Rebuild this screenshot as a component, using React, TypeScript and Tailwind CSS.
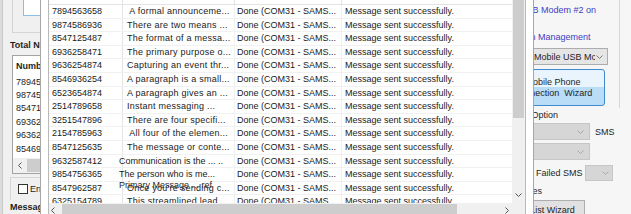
import React from "react";

type Row = { num: string; text: string; shift?: boolean; overlay?: string };

const rows: Row[] = [
	{ num: "7894563658", text: " A formal announceme..." },
	{ num: "9874586936", text: "There are two means ..." },
	{ num: "8547125487", text: "The format of a messa..." },
	{ num: "6936258471", text: "The primary purpose o..." },
	{ num: "9636254874", text: "Capturing an event thr..." },
	{ num: "8546936254", text: "A paragraph is a small..." },
	{ num: "6523654874", text: "A paragraph gives an ..." },
	{ num: "2514789658", text: "Instant messaging ..." },
	{ num: "3251547896", text: "There are four specifi..." },
	{ num: "2154785963", text: " All four of the elemen..." },
	{ num: "8547125635", text: "The message or conte..." },
	{ num: "9632587412", text: "Communication is the ... ..", shift: true },
	{ num: "9854756365", text: "The person who is me...", shift: true },
	{
		num: "8547962587",
		text: "Once you're sending c...",
		overlay: "Primary Message ... ref",
	},
	{ num: "6325154789", text: "This streamlined lead..." },
];

const bgNumbers = rows.slice(0, 6).map((r) => r.num);

const Chevron = ({
	dir,
	color = "#555555",
}: {
	dir: "down" | "left" | "right";
	color?: string;
}) => {
	const w = dir === "down" ? 7 : 4;
	const h = dir === "down" ? 4 : 7;
	const d =
		dir === "down"
			? "M0.5 0.5L3.5 3.5L6.5 0.5"
			: dir === "left"
				? "M3.5 0.5L0.5 3.5L3.5 6.5"
				: "M0.5 0.5L3.5 3.5L0.5 6.5";
	return (
		<svg width={w} height={h} viewBox={`0 0 ${w} ${h}`} className="block shrink-0">
			<path d={d} fill="none" stroke={color} strokeWidth="1" />
		</svg>
	);
};

const LeftPanel = () => (
	<div className="flex w-[127px] shrink-0 flex-col">
		<div className="ml-[9px] h-[33px] shrink-0 border-b border-l border-[#d5d5d5]">
			<div className="ml-[10px] h-[16px] border border-t-0 border-[#8fbdea] bg-white" />
		</div>
		<div className="ml-[7px] mt-[6px] shrink-0 whitespace-nowrap font-bold">
			Total Numbers
		</div>
		<div className="ml-[9px] mt-[4px] flex h-[119px] shrink-0 flex-col border border-[#a3a3a3] bg-white">
			<div className="flex h-[19px] shrink-0 items-center pl-[3px] font-bold">
				Number
			</div>
			{bgNumbers.map((n) => (
				<div key={n} className="flex h-[13.4px] shrink-0 items-center pl-[3px]">
					{n}
				</div>
			))}
			<div className="mt-auto flex h-[15px] shrink-0 bg-[#f0f0f0]">
				<div className="flex w-[13px] items-center justify-center">
					<Chevron dir="left" />
				</div>
				<div className="my-[1px] ml-[1px] flex-1 bg-[#cdcdcd]" />
			</div>
		</div>
		<div className="ml-[7px] mt-[3px] flex h-[23px] shrink-0 items-center border-l border-t border-[#d5d5d5] pl-[7px]">
			<div className="h-[10px] w-[10px] shrink-0 border border-[#333333] bg-white" />
			<span className="ml-[2px] whitespace-nowrap">Enable Delivery Report</span>
		</div>
		<div className="ml-[7px] mt-[1px] shrink-0 whitespace-nowrap font-bold">
			Message
		</div>
	</div>
);

const RightPanel = () => (
	<div className="flex w-[161px] shrink-0 flex-col bg-[#f6f6f6]">
		<div className="flex w-[150px] shrink-0 flex-col border-r border-[#d6d6d6] pb-[2px]">
			<div className="ml-[50px] mt-[4px] whitespace-nowrap text-[#3d3dc2]">
				USB Modem #2 on
			</div>
			<div className="ml-[20px] mt-[15px] whitespace-nowrap text-[#3d3dc2]">
				Connection Management
			</div>
			<div className="ml-[52px] mt-[5px] flex h-[17px] w-[86px] shrink-0 items-center border border-[#acacac] bg-[#e5e5e5]">
				<span className="flex-1 overflow-hidden whitespace-nowrap pl-[11px]">
					Mobile USB Modem
				</span>
				<span className="ml-[1px] mr-[4px]">
					<Chevron dir="down" color="#7a7a7a" />
				</span>
			</div>
			<div className="ml-[31px] mt-[4px] flex h-[37px] w-[104px] shrink-0 flex-col items-center justify-center rounded-[3px] border border-[#3d8ad1] bg-[linear-gradient(to_bottom,#e9f4fd_50%,#b9dcf7_50%)] leading-[11px]">
				<span className="whitespace-nowrap">Mobile Phone</span>
				<span className="whitespace-pre">Connection  Wizard</span>
			</div>
		</div>
		<div className="ml-[38px] mt-[1px] shrink-0 whitespace-nowrap">Send Option</div>
		<div className="mt-[2px] flex shrink-0 items-center">
			<div className="ml-[35px] flex h-[17px] w-[85px] items-center justify-end border border-[#c6c6c6] bg-[#d6d6d6] pr-[5px]">
				<Chevron dir="down" color="#a8a8a8" />
			</div>
			<span className="ml-[5px]">SMS</span>
		</div>
		<div className="ml-[35px] mt-[3px] flex h-[17px] w-[85px] shrink-0 items-center justify-end border border-[#c6c6c6] bg-[#d6d6d6] pr-[5px]">
			<Chevron dir="down" color="#a8a8a8" />
		</div>
		<div className="mt-[4px] flex h-[17px] shrink-0 items-center">
			<span className="ml-[42px] w-[73px] whitespace-nowrap">Retry Failed SMS</span>
			<div className="flex h-[16px] w-[28px] items-center justify-end border border-[#c6c6c6] bg-[#d6d6d6] pr-[3px]">
				<Chevron dir="down" color="#a8a8a8" />
			</div>
		</div>
		<div className="ml-[31px] mt-[4px] shrink-0 whitespace-nowrap">Templates</div>
		<div className="ml-[50px] mt-[3px] flex h-[22px] w-[65px] shrink-0 justify-center border border-[#adadad] bg-[#e1e1e1] pt-[3px] whitespace-nowrap">
			List Wizard
		</div>
	</div>
);

const Popup = () => (
	<div className="absolute left-[40px] top-0 flex h-[220px] w-[494px] border-x border-[#a7a7a7] bg-white px-[7px]">
		<div className="flex flex-1 flex-col border-x border-[#b9b9b9]">
			<div className="flex h-[203px] shrink-0">
				<div className="flex flex-1 flex-col overflow-hidden">
					<div className="flex h-[5px] shrink-0 border-b border-[#e3e3e3]">
						<div className="w-[74px] border-r border-[#e3e3e3]" />
						<div className="w-[112px] border-r border-[#e3e3e3]" />
						<div className="w-[107px] border-r border-[#e3e3e3]" />
						<div className="flex-1" />
					</div>
					{rows.map((r) => (
						<div
							key={r.num}
							className="flex h-[13.6px] shrink-0 items-center border-b border-[#f1f1f1] text-[#1a1a1a]"
						>
							<div className="h-full w-[74px] shrink-0 border-r border-[#e4e4e4] pl-[3px]">
								{r.num}
							</div>
							<div className="relative h-full w-[112px] shrink-0 whitespace-pre border-r border-[#f1f1f1] pl-[4px]">
								{r.shift ? (
									<span className="-ml-[8px]">{r.text}</span>
								) : (
									<span className="tracking-[0.25px]">{r.text}</span>
								)}
								{r.overlay && (
									<span className="absolute left-[-4px] top-[-3px] text-[#2a2a2a]">
										{r.overlay}
									</span>
								)}
							</div>
							<div className="h-full w-[107px] shrink-0 whitespace-nowrap border-r border-[#f1f1f1] pl-[2px]">
								Done (COM31 - SAMS...
							</div>
							<div className="h-full flex-1 whitespace-nowrap pl-[3px]">
								Message sent successfully.
							</div>
						</div>
					))}
				</div>
				<div className="flex w-[13px] shrink-0 flex-col bg-[#f0f0f0]">
					<div className="mx-[1px] h-[118px] bg-[#cdcdcd]" />
					<div className="flex-1" />
					<div className="flex h-[17px] items-center justify-center">
						<Chevron dir="down" />
					</div>
				</div>
			</div>
			<div className="flex h-[17px] shrink-0">
				<div className="flex flex-1 bg-[#f0f0f0]">
					<div className="flex w-[13px] items-start pl-[2px] pt-[4px]">
						<Chevron dir="left" />
					</div>
					<div className="mt-[1px] h-[13px] w-[395px] bg-[#cdcdcd]" />
					<div className="flex-1" />
					<div className="flex w-[13px] items-start justify-end pr-[3px] pt-[4px]">
						<Chevron dir="right" />
					</div>
				</div>
				<div className="w-[13px] bg-[#f0f0f0]" />
			</div>
		</div>
	</div>
);

export default function App() {
	return (
		<div className="relative flex h-[214px] w-[631px] overflow-hidden bg-[#f0f0f0] font-['Liberation_Sans',Arial,sans-serif] text-[9px] leading-[12px] text-[#1e1e1e]">
			<div className="w-[3px] shrink-0 border-r border-[#c9c9c9] bg-[#dcdcdc]" />
			<LeftPanel />
			<div className="flex-1" />
			<RightPanel />
			<Popup />
		</div>
	);
}
